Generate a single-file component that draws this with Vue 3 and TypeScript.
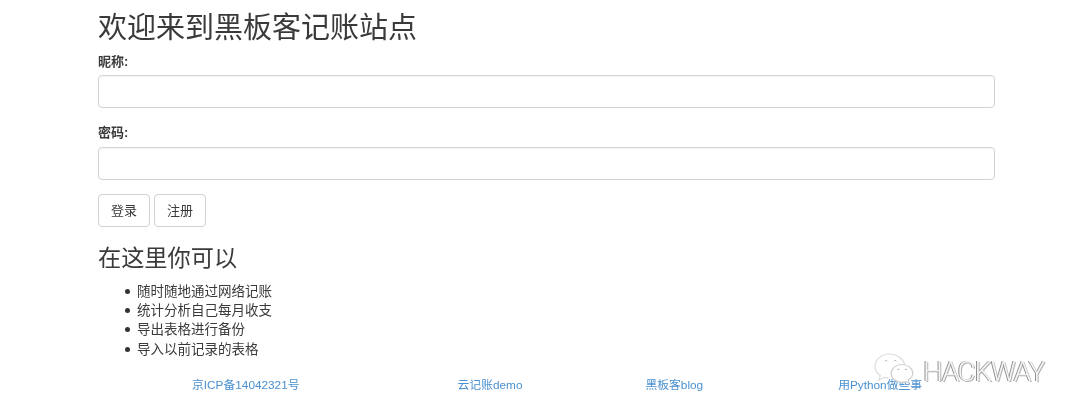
<script setup lang="ts">
const items: string[] = ['随时随地通过网络记账', '统计分析自己每月收支', '导出表格进行备份', '导入以前记录的表格']
const links: { text: string; cls: string }[] = [
  { text: '京ICP备14042321号', cls: 'l1' },
  { text: '云记账demo', cls: 'l2' },
  { text: '黑板客blog', cls: 'l3' },
  { text: '用Python做些事', cls: 'l4' },
]
</script>

<template>
  <div class="page">
    <main class="container">
      <h1>欢迎来到黑板客记账站点</h1>
      <form class="form" @submit.prevent>
        <div class="group">
          <label for="nick">昵称:</label>
          <input id="nick" type="text" />
        </div>
        <div class="group">
          <label for="pwd">密码:</label>
          <input id="pwd" type="password" />
        </div>
        <div class="buttons">
          <button type="button">登录</button>
          <button type="button">注册</button>
        </div>
      </form>
      <h2>在这里你可以</h2>
      <ul>
        <li v-for="item in items" :key="item"><i class="dot"></i>{{ item }}</li>
      </ul>
      <footer>
        <a v-for="link in links" :key="link.text" href="#" :class="link.cls">{{ link.text }}</a>
      </footer>
    </main>
    <div class="watermark">
      <svg width="40" height="30" viewBox="0 0 40 30" fill="none">
        <path d="M24 12.500C26.500 12 28.800 12 31 12.800 29.500 5.800 23 1 15.500 1 7.500 1 1 6.500 1 13.300c0 3.700 2 7 5.200 9.200L5 27l5.200-2.700c1.400.4 2.800.7 4.300.8" fill="#fff" stroke="#dcdcdc" stroke-width="1.200"/>
        <path d="M11 8.200c.6-1 1.700-1 2.300 0M20 8.200c.6-1 1.700-1 2.300 0" stroke="#aaa" stroke-width="1"/>
        <path d="M28 11.500c-6 0-10.800 4-10.800 8.900s4.800 8.900 10.800 8.900c1.300 0 2.500-.2 3.700-.5l3.100 1-.8-3c2.900-1.600 4.800-3.800 4.800-6.400 0-4.900-4.800-8.900-10.800-8.900z" fill="#fff" stroke="#cfcfcf" stroke-width="1.200"/>
        <path d="M23.500 16.800c.4-.8 1.300-.8 1.700 0M31 16.800c.4-.8 1.300-.8 1.700 0" stroke="#999" stroke-width="1"/>
      </svg>
      <span>HACKWAY</span>
    </div>
  </div>
</template>

<style>
html, body { margin: 0; background: #fff; }
</style>

<style scoped>
.page {
  position: relative;
  width: 1080px;
  height: 416px;
  overflow: hidden;
  background: #fff;
  color: #3a3a3a;
  font-family: "Liberation Sans", "Noto Sans CJK SC", sans-serif;
  font-size: 13px;
  line-height: 19px;
  filter: blur(0.4px);
}
.container {
  width: 897px;
  margin-left: 98px;
  padding-top: 10px;
}
h1 {
  margin: 0;
  font-size: 29px;
  font-weight: 400;
  line-height: 36px;
}
.form { margin-top: 7px; }
.group + .group { margin-top: 16px; }
label {
  display: block;
  font-weight: 700;
  margin-bottom: 4px;
  height: 18px;
  line-height: 18px;
}
.group + .group label { margin-bottom: 5px; }
input {
  display: block;
  box-sizing: border-box;
  width: 100%;
  height: 33px;
  border: 1px solid #d2d2d2;
  border-radius: 4px;
  background: #fff;
  box-shadow: inset 0 1px 1px rgba(0, 0, 0, 0.04);
  outline: none;
}
.buttons { display: flex; gap: 4px; margin-top: 14px; }
button {
  box-sizing: border-box;
  width: 52px;
  height: 33px;
  padding: 0;
  border: 1px solid #d2d2d2;
  border-radius: 4px;
  background: #fff;
  color: #3a3a3a;
  font: inherit;
}
h2 {
  margin: 16px 0 0;
  font-size: 23.200px;
  font-weight: 400;
  line-height: 30px;
}
ul {
  margin: 8.500px 0 0;
  padding-left: 27px;
  list-style: none;
}
li {
  display: flex;
  align-items: center;
  gap: 7px;
  height: 19.300px;
  line-height: 19px;
  font-size: 13.500px;
}
.dot {
  width: 5px;
  height: 5px;
  border-radius: 50%;
  background: #333;
  flex: none;
}
footer {
  display: flex;
  margin-top: 17.500px;
  font-size: 11.800px;
}
a { color: #4a90d0; text-decoration: none; white-space: nowrap; }
.l1 { margin-left: 94px; }
.l2 { margin-left: 158px; }
.l3 { margin-left: 123px; }
.l4 { margin-left: 135px; }
.watermark {
  position: absolute;
  left: 874px;
  top: 353px;
  display: flex;
  align-items: flex-start;
  gap: 9px;
}
.watermark span {
  font-family: Roboto, "Liberation Sans", sans-serif;
  font-size: 28px;
  line-height: 29px;
  margin-top: 4px;
  font-weight: 300;
  color: #f4f4f4;
  text-shadow: -1px 0 0 #8f8f8f, 1px 1px 0 #b5b5b5;
  letter-spacing: -1.400px;
}
</style>
